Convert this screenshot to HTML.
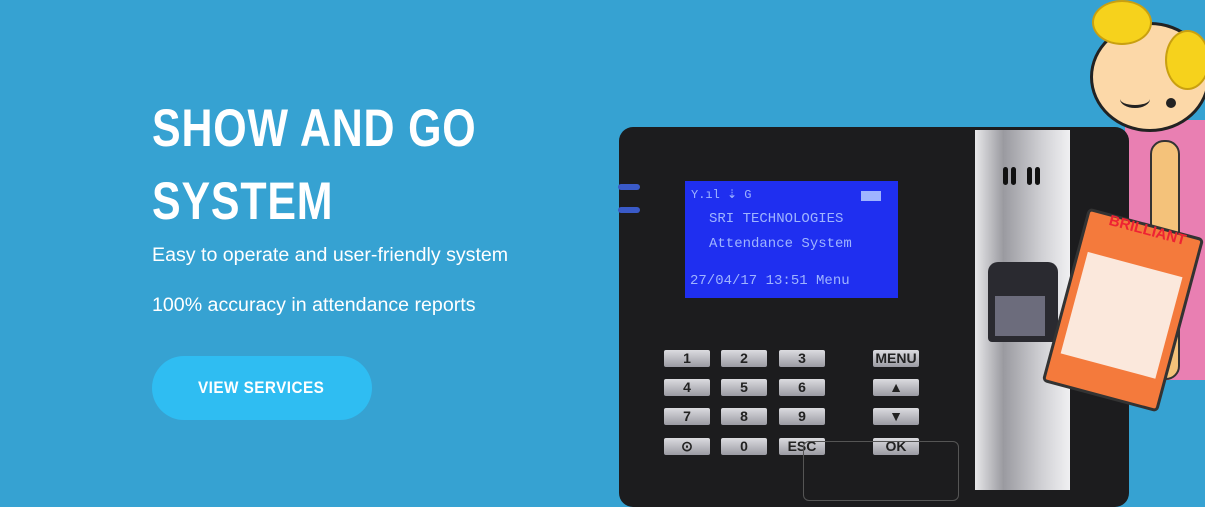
<!DOCTYPE html>
<html><head><meta charset="utf-8"><style>
*{margin:0;padding:0;box-sizing:border-box}
body{width:1205px;height:490px;overflow:hidden;background:#36a2d2;position:relative;font-family:"Liberation Sans",sans-serif}
.a{position:absolute}
h1{position:absolute;left:152px;top:92px;color:#fff;font-size:53px;line-height:73px;font-weight:bold;transform:scaleX(.81);transform-origin:left top;white-space:nowrap;letter-spacing:1px}
.p{position:absolute;left:152px;color:#fff;font-size:19.6px}
.btn{position:absolute;left:152px;top:356px;width:220px;height:64px;border-radius:32px;background:#2fbdf2}
.btn span{position:absolute;left:46px;top:22px;color:#fff;font-weight:bold;font-size:17px;transform:scaleX(.9);transform-origin:left top;letter-spacing:.5px;white-space:nowrap}
.k{position:absolute;width:46px;height:17px;background:linear-gradient(#dcdce0,#9a9aa2);border-radius:2px;font:bold 14px "Liberation Sans",sans-serif;color:#222;text-align:center;line-height:17px}
.lcd{font-family:"Liberation Mono",monospace;color:#9fb4ff;position:absolute;font-size:14px;white-space:nowrap}
</style></head><body>
<h1>SHOW AND GO<br>SYSTEM</h1>
<div class="p" style="top:244px">Easy to operate and user-friendly system</div>
<div class="p" style="top:294px">100% accuracy in attendance reports</div>
<div class="btn"><span>VIEW SERVICES</span></div>

<!-- girl -->
<div class="a" style="left:1125px;top:120px;width:80px;height:260px;background:#e97fb2"></div>
<div class="a" style="left:1150px;top:140px;width:30px;height:240px;background:#f4c27a;border:2px solid #333;border-radius:14px"></div>
<div class="a" style="left:1090px;top:22px;width:120px;height:110px;border-radius:50%;background:#fcd8a8;border:3px solid #222"></div>
<div class="a" style="left:1092px;top:0;width:60px;height:45px;border-radius:50%;background:#f6d21c;border:2px solid #c9a010"></div>
<div class="a" style="left:1165px;top:30px;width:45px;height:60px;border-radius:50%;background:#f6d21c;border:2px solid #c9a010"></div>
<div class="a" style="left:1120px;top:90px;width:30px;height:18px;border-bottom:3px solid #222;border-radius:0 0 50% 50%"></div>
<div class="a" style="left:1166px;top:98px;width:10px;height:10px;border-radius:50%;background:#222"></div>

<!-- device -->
<div class="a" style="left:619px;top:127px;width:510px;height:380px;border-radius:14px;background:#1c1c1e"></div>
<div class="a" style="left:975px;top:130px;width:95px;height:360px;background:linear-gradient(90deg,#e8e8ea,#9a9aa0 30%,#d0d0d4 70%,#f0f0f2)"></div>
<div class="a" style="left:988px;top:262px;width:70px;height:80px;border-radius:10px 10px 4px 4px;background:#2a2a30"></div>
<div class="a" style="left:995px;top:296px;width:50px;height:40px;background:#6c6c7c"></div>
<div class="a" style="left:1003px;top:167px;width:5px;height:18px;border-radius:3px;background:#111"></div>
<div class="a" style="left:1011px;top:167px;width:5px;height:18px;border-radius:3px;background:#111"></div>
<div class="a" style="left:1027px;top:167px;width:5px;height:18px;border-radius:3px;background:#111"></div>
<div class="a" style="left:1035px;top:167px;width:5px;height:18px;border-radius:3px;background:#111"></div>
<div class="a" style="left:618px;top:184px;width:22px;height:6px;background:#3a5ac8;border-radius:3px"></div>
<div class="a" style="left:618px;top:207px;width:22px;height:6px;background:#3a5ac8;border-radius:3px"></div>
<div class="a" style="left:685px;top:181px;width:213px;height:117px;background:#1f2ff0"></div>
<div class="lcd" style="left:691px;top:187px;font-size:12px">Y.ıl ⇣ G</div>
<div class="a" style="left:861px;top:191px;width:20px;height:10px;background:#9fb4ff"></div>
<div class="lcd" style="left:709px;top:211px">SRI TECHNOLOGIES</div>
<div class="lcd" style="left:709px;top:236px">Attendance System</div>
<div class="lcd" style="left:690px;top:273px">27/04/17 13:51  Menu</div>

<div class="k" style="left:664px;top:350px">1</div><div class="k" style="left:721px;top:350px">2</div><div class="k" style="left:779px;top:350px">3</div><div class="k" style="left:873px;top:350px">MENU</div>
<div class="k" style="left:664px;top:379px">4</div><div class="k" style="left:721px;top:379px">5</div><div class="k" style="left:779px;top:379px">6</div><div class="k" style="left:873px;top:379px">▲</div>
<div class="k" style="left:664px;top:408px">7</div><div class="k" style="left:721px;top:408px">8</div><div class="k" style="left:779px;top:408px">9</div><div class="k" style="left:873px;top:408px">▼</div>
<div class="k" style="left:664px;top:438px">⊙</div><div class="k" style="left:721px;top:438px">0</div><div class="k" style="left:779px;top:438px">ESC</div><div class="k" style="left:873px;top:438px">OK</div>
<div class="a" style="left:803px;top:441px;width:156px;height:60px;border:1px solid #555;border-radius:6px"></div>

<!-- card -->
<div class="a" style="left:1063px;top:220px;width:120px;height:180px;background:#f47a3c;border:3px solid #333;border-radius:5px;transform:rotate(15deg)">
<div style="margin:40px 8px 20px;height:105px;background:#fbe8dc"></div></div>
<div class="a" style="left:1108px;top:222px;color:#e23;font-weight:bold;font-size:15px;transform:rotate(15deg)">BRILLIANT</div>
</body></html>
